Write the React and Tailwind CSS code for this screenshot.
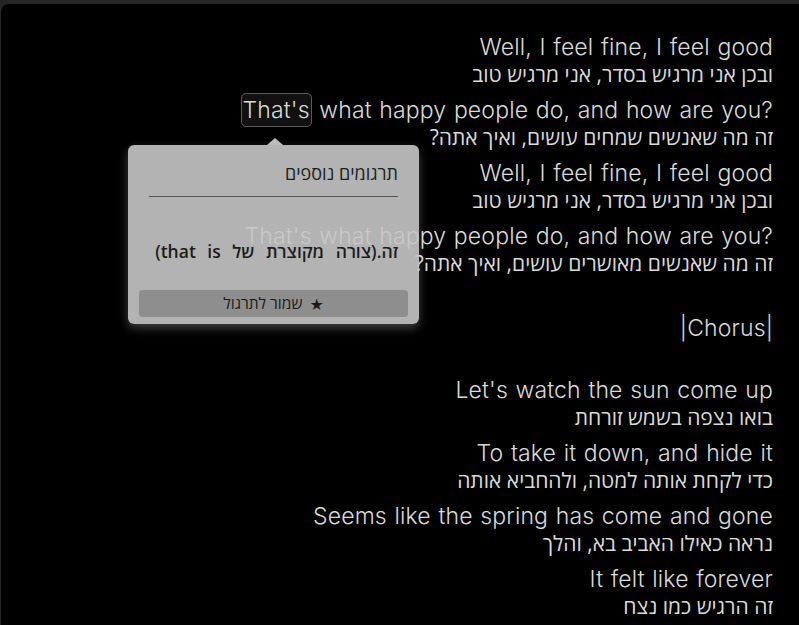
import React from 'react';

// lyric rows: english line + hebrew translation
const blocks = [
  { en: 'Well, I feel fine, I feel good', he: 'ובכן אני מרגיש בסדר, אני מרגיש טוב' },
  { en: "That's what happy people do, and how are you?", he: 'זה מה שאנשים שמחים עושים, ואיך אתה?', mark: true },
  { en: 'Well, I feel fine, I feel good', he: 'ובכן אני מרגיש בסדר, אני מרגיש טוב' },
  { en: "That's what happy people do, and how are you?", he: 'זה מה שאנשים מאושרים עושים, ואיך אתה?' },
];

const blocks2 = [
  { en: "Let's watch the sun come up", he: 'בואו נצפה בשמש זורחת' },
  { en: 'To take it down, and hide it', he: 'כדי לקחת אותה למטה, ולהחביא אותה' },
  { en: 'Seems like the spring has come and gone', he: 'נראה כאילו האביב בא, והלך' },
  { en: 'It felt like forever', he: 'זה הרגיש כמו נצח' },
];

const enCls =
  "font-['Inter',sans-serif] text-right text-[23px] leading-[27px] font-light tracking-[0.15px] [word-spacing:1px] text-[#dadada]";
const heFont = "font-['Open_Sans','DejaVu_Sans',sans-serif]";

const Line = ({ en, he, mark }) => (
  <div className="mb-[10px]">
    <div dir="ltr" className={enCls}>
      {mark ? (
        <>
          <span className="rounded-[5px] border border-[#5a5a5a] bg-[#111] px-px py-[2px]">That's</span>
          {' what happy people do, and how are you?'}
        </>
      ) : (
        en
      )}
    </div>
    <div className={`${heFont} text-[21px] leading-[26px] text-[#dadada]`}>{he}</div>
  </div>
);

export default function App() {
  return (
    <div className="h-[625px] overflow-hidden bg-[#262626] pt-1 pl-px">
      <div dir="rtl" className="relative h-full rounded-tl-lg bg-black pr-[26px] pt-[30px]">
        {blocks.map((b, i) => (
          <Line key={i} {...b} />
        ))}

        <div className="mt-[39px] mb-[35px]">
          <div dir="ltr" className={`${enCls} text-[22px]`}>|Chorus|</div>
        </div>

        {blocks2.map((b, i) => (
          <Line key={i} {...b} />
        ))}

        {/* translation popup */}
        <div className="absolute left-[127px] top-[141px] w-[291px] rounded-md bg-[#c6c6c6]/90 px-[11px] pb-[7px] pt-[16px] shadow-[0_4px_10px_rgba(255,255,255,0.25)]">
          <div className="absolute -top-[7px] left-[139px] h-0 w-0 border-x-[8px] border-b-[7px] border-x-transparent border-b-[#bcbcbc]" />
          <div className={`${heFont} px-[10px] text-[18px] font-medium leading-[24px] text-[#1e1e1e]`}>תרגומים נוספים</div>
          <div className="mx-[10px] mt-[11px] h-px bg-[#555]" />
          <div className={`${heFont} mt-[42px] whitespace-nowrap px-[10px] text-[17.5px] font-semibold leading-[24px] text-[#1c1c1c] [word-spacing:7px]`}>
            זה.(צורה מקוצרת של that is)
          </div>
          <button className={`${heFont} mt-[27px] flex h-[27px] w-full items-center justify-center gap-[7px] rounded-sm bg-[#8e8e8e] text-[15.5px] font-medium text-[#1a1a1a]`}>
            <span className="text-[16px] leading-none">★</span>
            <span>שמור לתרגול</span>
          </button>
        </div>
      </div>
    </div>
  );
}
